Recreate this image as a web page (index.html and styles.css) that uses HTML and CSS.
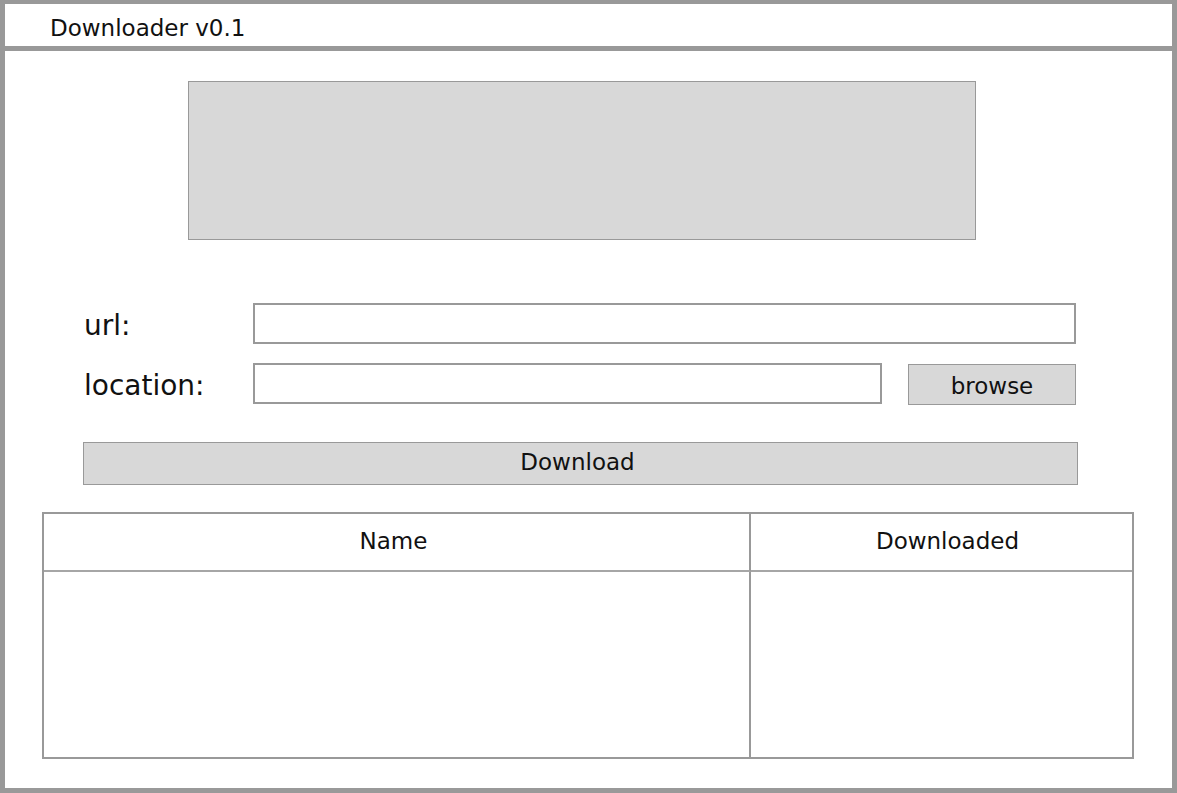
FILE: index.html
```html
<!DOCTYPE html>
<html>
<head>
<meta charset="utf-8">
<title>Downloader v0.1</title>
<link rel="stylesheet" href="styles.css">
</head>
<body>
<div class="window">
  <div class="titlebar">Downloader v0.1</div>
  <div class="content">
    <div class="banner"></div>
    <div class="form">
      <div class="row">
        <div class="label">url:</div>
        <div class="input input-url"></div>
      </div>
      <div class="row row-location">
        <div class="label">location:</div>
        <div class="input input-location"></div>
        <div class="btn btn-browse">browse</div>
      </div>
      <div class="btn btn-download">Download</div>
    </div>
    <div class="table">
      <div class="th th-name">Name</div>
      <div class="th th-done">Downloaded</div>
      <div class="td td-name"></div>
      <div class="td td-done"></div>
    </div>
  </div>
</div>
</body>
</html>
```

FILE: styles.css
```css
html, body {
  margin: 0;
  padding: 0;
  background: #ffffff;
}
body {
  font-family: "DejaVu Sans", "Liberation Sans", sans-serif;
  color: #111;
}
.window {
  box-sizing: border-box;
  width: 1177px;
  height: 793px;
  border: 5px solid #999999;
  border-top-width: 4px;
  display: flex;
  flex-direction: column;
}
.titlebar {
  box-sizing: border-box;
  border-bottom: 5px solid #999999;
  height: 47px;
  padding-left: 45px;
  padding-top: 6px;
  font-size: 23px;
  line-height: 36px;
}
.content {
  flex: 1;
  display: flex;
  flex-direction: column;
}
.banner {
  margin: 30px 0 0 183px;
  width: 788px;
  height: 159px;
  box-sizing: border-box;
  background: #d8d8d8;
  border: 1px solid #999999;
}
.form {
  margin-top: 63px;
  padding-left: 78px;
  display: flex;
  flex-direction: column;
}
.row {
  display: flex;
  align-items: center;
  height: 41px;
}
.row-location {
  margin-top: 19px;
}
.label {
  box-sizing: border-box;
  width: 170px;
  font-size: 28px;
  line-height: 41px;
  padding-left: 1px;
  padding-top: 3px;
}
.input {
  box-sizing: border-box;
  height: 41px;
  border: 2px solid #999999;
  background: #fff;
}
.input-url { width: 823px; }
.input-location { width: 629px; }
.btn {
  box-sizing: border-box;
  background: #d8d8d8;
  border: 1px solid #999999;
  font-size: 23px;
  text-align: center;
}
.btn-browse {
  margin-left: 26px;
  width: 168px;
  height: 41px;
  line-height: 39px;
  padding-top: 2px;
  position: relative;
  top: 1px;
}
.btn-download {
  margin-top: 38px;
  width: 995px;
  height: 43px;
  line-height: 38px;
  padding-right: 6px;
}
.table {
  margin: 27px 0 0 37px;
  width: 1092px;
  height: 247px;
  box-sizing: border-box;
  border: 2px solid #999999;
  display: grid;
  grid-template-columns: 707px 1fr;
  grid-template-rows: 58px 1fr;
}
.th {
  font-size: 23px;
  line-height: 54px;
  text-align: center;
  border-bottom: 2px solid #a6a6a6;
  height: 58px;
  box-sizing: border-box;
}
.th-name { border-right: 2px solid #999999; padding-right: 6px; }
.th-done { padding-left: 12px; }
.td-name { border-right: 2px solid #999999; }
```
